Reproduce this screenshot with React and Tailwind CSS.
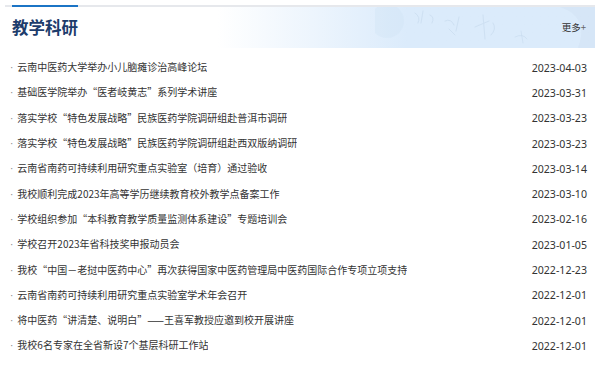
const news = [
  ['云南中医药大学举办小儿脑瘫诊治高峰论坛', '2023-04-03'],
  ['基础医学院举办“医者岐黄志”系列学术讲座', '2023-03-31'],
  ['落实学校“特色发展战略”民族医药学院调研组赴普洱市调研', '2023-03-23'],
  ['落实学校“特色发展战略”民族医药学院调研组赴西双版纳调研', '2023-03-23'],
  ['云南省南药可持续利用研究重点实验室（培育）通过验收', '2023-03-14'],
  ['我校顺利完成2023年高等学历继续教育校外教学点备案工作', '2023-03-10'],
  ['学校组织参加“本科教育教学质量监测体系建设”专题培训会', '2023-02-16'],
  ['学校召开2023年省科技奖申报动员会', '2023-01-05'],
  ['我校“中国－老挝中医药中心”再次获得国家中医药管理局中医药国际合作专项立项支持', '2022-12-23'],
  ['云南省南药可持续利用研究重点实验室学术年会召开', '2022-12-01'],
  ['将中医药“讲清楚、说明白”——王喜军教授应邀到校开展讲座', '2022-12-01'],
  ['我校6名专家在全省新设7个基层科研工作站', '2022-12-01'],
];

// faint calligraphy-like backdrop on the right of the header
function Watermark() {
  return (
    <svg className="absolute right-0 top-0 h-full w-[220px] pointer-events-none" viewBox="0 0 220 41" fill="none">
      <circle cx="12" cy="14" r="17" fill="#cfe1f3" opacity="0.35" />
      <g stroke="#c4d8ec" strokeWidth="1" strokeLinecap="round" opacity="0.55">
        <path d="M40 6 q6 4 3 10 M48 4 l-2 12 M55 8 q5 2 2 8" />
        <path d="M70 14 q6 -3 9 4 M74 22 l6 6 M84 10 l-3 14" />
        <path d="M100 20 l14 -6 M108 8 l2 24 M118 16 q4 6 -2 12" />
        <path d="M140 30 q8 -4 12 2 M146 24 l2 12" />
      </g>
      <path d="M185 0 q30 10 18 41 L220 41 L220 0 Z" fill="#c6d9ec" opacity="0.25" />
    </svg>
  );
}

export default function App() {
  return (
    <div className="w-[600px] h-[367px] bg-white overflow-hidden pt-[5px] font-['Noto_Sans_CJK_SC','Noto_Sans',sans-serif]">
      <div className="mx-[5px] relative border-t-2 border-[#e6e8ec]">
        <div className="absolute left-[7px] -top-[2px] w-[66px] h-[2px] bg-[#1b74c5]" />
        <div className="relative h-[41px] flex items-center justify-between pl-[7px] pr-[9px] bg-linear-to-r from-white from-[36%] to-[#dbebfb] to-[68%]">
          <Watermark />
          <h2 className="relative text-[16.5px] font-bold text-[#1d3c6c] leading-none">教学科研</h2>
          <a className="relative text-[9.5px] text-[#333] leading-none">更多<span className="text-[#666]">+</span></a>
        </div>
        <ul className="pt-[7px]">
          {news.map(([title, date], i) => (
            <li key={i} className="h-[25.3px] flex items-center justify-between pl-[5px] pr-[8px] text-[#333]">
              <span className="text-[10px] leading-[16px] truncate">
                <span className="font-['Liberation_Sans',sans-serif] text-[#888] mr-[4px]">·</span>
                {title}
              </span>
              <span className="text-[10.6px] leading-[16px] font-['Noto_Sans',sans-serif] shrink-0 ml-4">{date}</span>
            </li>
          ))}
        </ul>
      </div>
    </div>
  );
}
